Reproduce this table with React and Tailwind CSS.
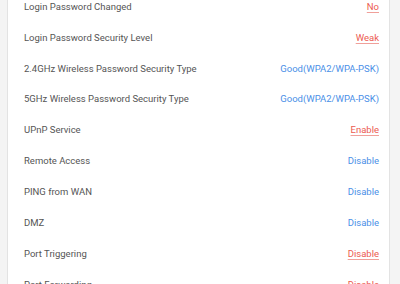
const rows = [
  { label: 'Login Password Changed', value: 'No', tone: 'bad' },
  { label: 'Login Password Security Level', value: 'Weak', tone: 'bad' },
  { label: '2.4GHz Wireless Password Security Type', value: 'Good(WPA2/WPA-PSK)', tone: 'good' },
  { label: '5GHz Wireless Password Security Type', value: 'Good(WPA2/WPA-PSK)', tone: 'good' },
  { label: 'UPnP Service', value: 'Enable', tone: 'bad' },
  { label: 'Remote Access', value: 'Disable', tone: 'good' },
  { label: 'PING from WAN', value: 'Disable', tone: 'good' },
  { label: 'DMZ', value: 'Disable', tone: 'good' },
  { label: 'Port Triggering', value: 'Disable', tone: 'bad' },
  { label: 'Port Forwarding', value: 'Disable', tone: 'bad' },
];

export default function App() {
  return (
    <div className="w-[400px] h-[284px] overflow-hidden flex bg-[#f4f4f4] font-['Roboto',sans-serif]">
      <div className="w-[8px] border-r border-[#e3e3e3]" />
      <div className="flex-1 bg-white border-r border-[#e3e3e3]">
        <div className="-mt-[8.5px] pl-[16px] pr-[10px]">
          {rows.map((r) => (
            <div key={r.label} className="h-[30.9px] flex items-center justify-between text-[9.5px]">
              <span className="text-[#555555]">{r.label}</span>
              {r.tone === 'bad' ? (
                <span className="text-[#ec5a50] underline underline-offset-2 decoration-[#f0a09a]">{r.value}</span>
              ) : (
                <span className="text-[#4a8fe7]">{r.value}</span>
              )}
            </div>
          ))}
        </div>
      </div>
      <div className="w-[10px]" />
    </div>
  );
}
